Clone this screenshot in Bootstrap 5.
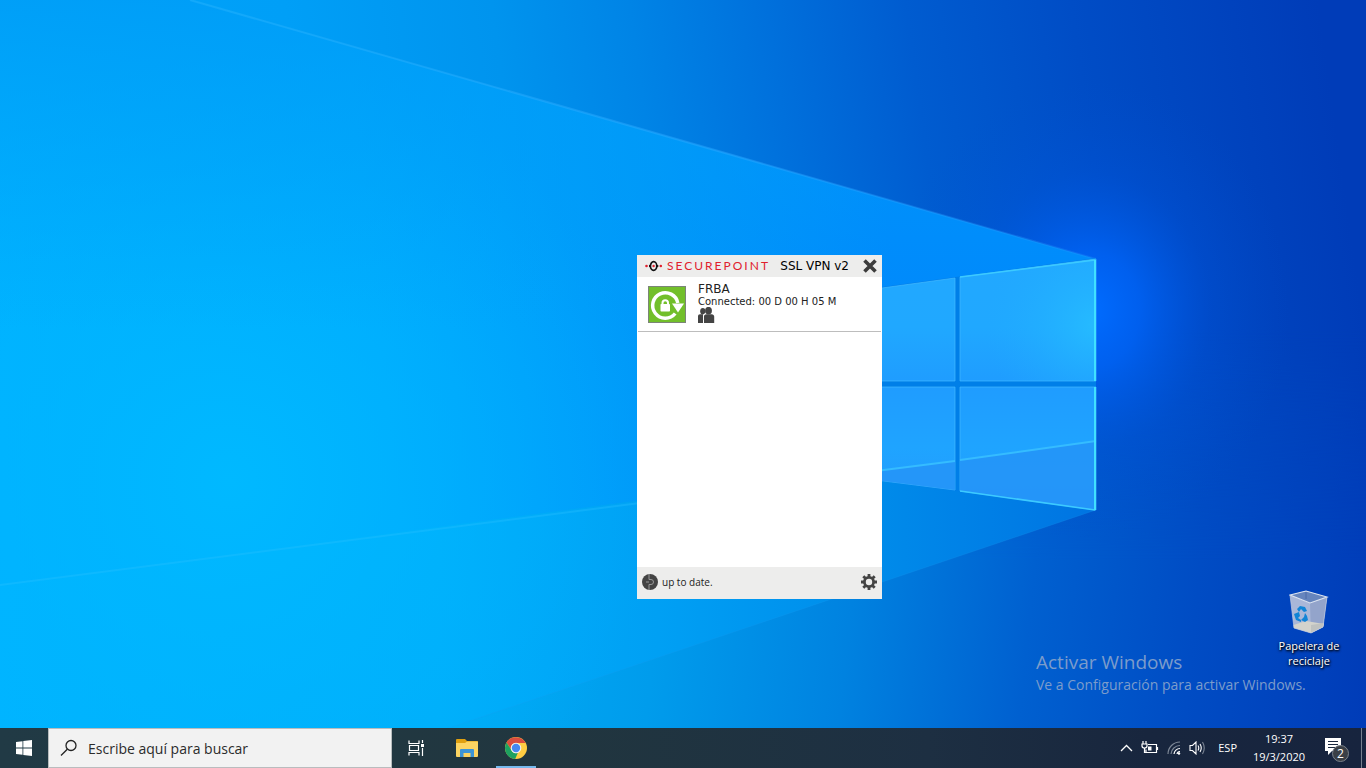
<!DOCTYPE html>
<html lang="es">
<head>
<meta charset="utf-8">
<meta name="viewport" content="width=device-width, initial-scale=1">
<title>Escritorio</title>
<link rel="stylesheet" href="https://cdn.jsdelivr.net/npm/bootstrap@5.3.0/dist/css/bootstrap.min.css">
<style>
  body { font-family: "Open Sans", "Noto Sans", sans-serif; background: #0078d7; }
  svg { display: block; flex: none; }
  button { color: inherit; }
  .wallpaper { width: 100%; height: 100%; z-index: 0; }

  /* VPN client window */
  .vpn { left: 637px; top: 255px; width: 245px; height: 344px; background: #fff; color: #222; font-family: "DejaVu Sans", sans-serif; font-size: 12px; line-height: 14px; }
  .vpn-bar { background: #ededec; }
  .vpn-head { height: 22px; padding: 0 5px 0 8px; }
  .vpn-foot { height: 32px; padding: 0 5px 2px; font-family: "Open Sans", sans-serif; font-size: 10px; }
  .brand-name { font-family: Lato, sans-serif; letter-spacing: 2px; color: #e0202c; }
  .vpn-item { height: 55px; padding: 5px 10px 0; border-bottom: 1px solid #bdbdbd; margin: 0 1px; }
  .conn-time { font-size: 10px; line-height: 11px; }
  .vpn-close { margin-left: 14px; }

  /* Desktop */
  .bin { right: 17px; bottom: 60px; width: 80px; color: #fff; font-size: 11px; line-height: 15px; text-shadow: 1px 1px 2px #000, 0 1px 3px #000; }
  .watermark { right: 54px; bottom: 32px; width: 276px; color: #7c9ccb; font-size: 14px; line-height: 22px; }
  .watermark h1 { font-size: 19px; line-height: 24px; }

  /* Taskbar */
  .taskbar { height: 40px; background: linear-gradient(90deg, #213a45 0%, #21363f 40%, #1d2f42 68%, #18263e 84%, #17243e 100%); color: #fff; font-size: 11px; z-index: 1; }
  .task { width: 48px; height: 40px; }
  .explorer { margin-left: 3px; }
  .task-open { width: 40px; margin: 0 5px; border-bottom: 2px solid #76b9ed !important; }
  .finder { width: 344px; height: 40px; background: #f2f2f2; border: 1px solid #b9bcbe; padding-left: 11px; color: #222; }
  .finder input { font-size: 14px; color: #222; outline: 0; margin-left: 10px; }
  .finder input::placeholder { color: #2b2b2b; opacity: 1; }
  .clock { width: 64px; line-height: 18px; margin: 0 10px; }
  .show-desktop { width: 5px; height: 40px; border-left: 1px solid #76808e !important; }
</style>
</head>
<body class="vh-100 d-flex flex-column overflow-hidden position-relative">

<svg class="wallpaper position-absolute top-0 start-0" viewBox="0 0 1366 768" preserveAspectRatio="none" aria-hidden="true">
  <defs>
    <linearGradient id="base" x1="0" x2="1366" y1="0" y2="0" gradientUnits="userSpaceOnUse" gradientTransform="rotate(-8 683 384)">
      <stop offset="0" stop-color="#00a4fa"/><stop offset=".25" stop-color="#009ff7"/><stop offset=".4" stop-color="#0094ee"/><stop offset=".5" stop-color="#0084e6"/><stop offset=".6" stop-color="#0070dc"/><stop offset=".7" stop-color="#005cd0"/><stop offset=".82" stop-color="#004dc6"/><stop offset="1" stop-color="#003cb8"/>
    </linearGradient>
    <linearGradient id="low" x1="0" x2="1366" y1="560" y2="700" gradientUnits="userSpaceOnUse">
      <stop offset="0" stop-color="#00b6ff"/><stop offset=".3" stop-color="#00b0f8"/><stop offset=".48" stop-color="#009cec"/><stop offset=".62" stop-color="#0082e0"/><stop offset=".75" stop-color="#0060d0"/><stop offset=".87" stop-color="#004cc4"/><stop offset="1" stop-color="#003cb8"/>
    </linearGradient>
    <linearGradient id="beam" x1="0" x2="1096" y1="420" y2="300" gradientUnits="userSpaceOnUse">
      <stop offset="0" stop-color="#00b2ff"/><stop offset=".35" stop-color="#00a8fd"/><stop offset=".6" stop-color="#0098f9"/><stop offset=".82" stop-color="#0088fc"/><stop offset="1" stop-color="#0088fc"/>
    </linearGradient>
    <linearGradient id="dusk" x1="0" x2="0" y1="0" y2="330" gradientUnits="userSpaceOnUse">
      <stop offset="0" stop-color="#009bf6" stop-opacity=".8"/><stop offset="1" stop-color="#00a0f8" stop-opacity="0"/>
    </linearGradient>
    <linearGradient id="under" x1="0" x2="1096" y1="0" y2="0" gradientUnits="userSpaceOnUse">
      <stop offset="0" stop-color="#00b4ff"/><stop offset=".4" stop-color="#00aefa"/><stop offset=".6" stop-color="#00a0f4"/><stop offset=".8" stop-color="#008bea"/><stop offset="1" stop-color="#0074e2"/>
    </linearGradient>
    <radialGradient id="glow">
      <stop offset="0" stop-color="#006cff"/><stop offset=".25" stop-color="#0066fc" stop-opacity=".75"/><stop offset=".6" stop-color="#0058e4" stop-opacity=".25"/><stop offset="1" stop-color="#0050d0" stop-opacity="0"/>
    </radialGradient>
    <radialGradient id="soft" cx="230" cy="480" r="430" gradientUnits="userSpaceOnUse">
      <stop offset="0" stop-color="#00b9ff"/><stop offset="1" stop-color="#00b4ff" stop-opacity="0"/>
    </radialGradient>
    <linearGradient id="ray" x1="190" x2="1096" y1="0" y2="0" gradientUnits="userSpaceOnUse">
      <stop offset="0" stop-color="#3cbcff" stop-opacity=".3"/><stop offset=".6" stop-color="#2ba6ff" stop-opacity=".5"/><stop offset="1" stop-color="#2a9aff" stop-opacity=".25"/>
    </linearGradient>
    <linearGradient id="pane" x1="0" x2="0" y1="260" y2="510" gradientUnits="userSpaceOnUse">
      <stop offset="0" stop-color="#22a8ff"/><stop offset=".27" stop-color="#20a8ff"/><stop offset=".5" stop-color="#1f9cff"/><stop offset=".75" stop-color="#1fa4ff"/><stop offset="1" stop-color="#259afd"/>
    </linearGradient>
    <radialGradient id="shine" cx="1096" cy="325" r="110" gradientUnits="userSpaceOnUse">
      <stop offset="0" stop-color="#27c0ff" stop-opacity=".8"/><stop offset="1" stop-color="#20acff" stop-opacity="0"/>
    </radialGradient>
    <linearGradient id="fade" x1="0" x2="0" y1="330" y2="560" gradientUnits="userSpaceOnUse">
      <stop offset="0" stop-color="#fff" stop-opacity="0"/><stop offset="1" stop-color="#fff"/>
    </linearGradient>
    <mask id="lower"><rect width="1366" height="768" fill="url(#fade)"/></mask>
  </defs>
  <rect width="1366" height="768" fill="url(#base)"/>
  <rect width="1366" height="768" fill="url(#low)" mask="url(#lower)"/>
  <ellipse cx="1090" cy="310" rx="200" ry="230" fill="url(#glow)"/>
  <path d="M0 0H190L1096 259V440L0 585Z" fill="url(#beam)"/>
  <path d="M0 585L1096 440V510L330 768H0Z" fill="url(#under)"/>
  <rect width="700" height="768" fill="url(#soft)"/>
  <path d="M0 0H190L1096 259V330H0Z" fill="url(#dusk)"/>
  <path d="M190 0L1096 259" stroke="url(#ray)" stroke-width="2"/>
  <path d="M0 585L640 503" stroke="#28c0ff" stroke-opacity=".35" stroke-width="2"/>
  <path d="M330 768L1096 510" stroke="#1f9af2" stroke-opacity=".2"/>
  <path d="M860 290L1096 258V510L860 478Z" fill="#007fe8"/>
  <g fill="url(#pane)" stroke="#43b9ff" stroke-opacity=".7">
    <path d="M860 291L955 278V381H860Z"/><path d="M960 277L1096 259V381H960Z"/>
    <path d="M860 387H955V490L860 478Z"/><path d="M960 387H1096V510L960 491Z"/>
  </g>
  <path d="M960 277L1096 259V381H960Z" fill="url(#shine)"/>
  <path d="M860 473L955 461V490L860 478ZM960 460L1096 441V510L960 491Z" fill="#2494f8" opacity=".85"/>
  <path d="M860 473L955 461M960 460L1096 441" stroke="#35bcff" stroke-width="2"/>
  <path d="M960 277L1095 260M1095 510L960 491" fill="none" stroke="#3ccaff" stroke-width="1.500"/>
  <path d="M1095 260V381M1095 387V510" stroke="#40e0ff" stroke-width="2"/>
</svg>

<main class="flex-grow-1 position-relative">
  <section class="vpn position-absolute d-flex flex-column" aria-label="SSL VPN">
    <header class="vpn-bar vpn-head d-flex align-items-center">
      <svg width="18" height="12" viewBox="0 0 18 12"><circle cx="1.500" cy="6" r="1.300" fill="#e0202c"/><circle cx="15.800" cy="6" r="1.300" fill="#e0202c"/><ellipse cx="8.600" cy="6" rx="3.200" ry="4.300" fill="none" stroke="#111" stroke-width="1.700"/><path d="M4 6h1.500M11.800 6h1.500" stroke="#111" stroke-width="1.800"/><circle cx="8.600" cy="6" r="1.200" fill="#e0202c"/></svg>
      <span class="brand-name ps-1">SECUREPOINT</span>
      <span class="ms-auto text-black text-nowrap">SSL VPN v2</span>
      <button class="vpn-close border-0 bg-transparent p-0" aria-label="Cerrar"><svg width="14" height="14" viewBox="0 0 14 14"><path d="M1.500 1.500L12.500 12.500M12.500 1.500L1.500 12.500" stroke="#3c3c3c" stroke-width="3.600"/></svg></button>
    </header>
    <div class="vpn-item d-flex">
      <svg class="mt-1" width="38" height="38" viewBox="0 0 38 38"><rect x=".5" y=".5" width="37" height="36" fill="#72bf2a" stroke="#7b8577"/><path d="M27.200 27.500A12.700 12.700 0 1 1 29.800 17" fill="none" stroke="#fff" stroke-width="3.500"/><path d="M24 17.500H36L30 26.500Z" fill="#fff"/><rect x="12.500" y="18" width="9.500" height="7.500" rx=".8" fill="#fff"/><path d="M14.500 18.500V17a2.750 2.750 0 0 1 5.500 0V18.500" fill="none" stroke="#fff" stroke-width="2"/></svg>
      <div class="ms-2 ps-1">
        <div>FRBA</div>
        <div class="conn-time">Connected: 00 D 00 H 05 M</div>
        <svg width="17" height="17" viewBox="0 0 17 17" fill="#444"><ellipse cx="4.800" cy="4.200" rx="2.600" ry="3.300"/><path d="M0 16V9Q0 7.300 2 7.300H5V16Z"/><ellipse cx="10.500" cy="3.700" rx="3.400" ry="3.800"/><path d="M5.900 16V9.800Q5.900 7.300 8.500 7.300H13.500Q16.200 7.300 16.200 9.800V16Z"/><path d="M5.500 16V8.500Q5.700 7 7.500 6.500" fill="none" stroke="#fff" stroke-width=".8"/></svg>
      </div>
    </div>
    <footer class="vpn-bar vpn-foot d-flex align-items-center mt-auto">
      <svg width="16" height="16" viewBox="0 0 16 16"><circle cx="8" cy="8" r="8" fill="#444"/><path d="M7 0V5.500H9Q11.500 5.500 11.500 8T9 10.500H7V16M7 8H4" fill="none" stroke="#999" stroke-width="1"/></svg>
      <span class="ps-1">up to date.</span>
      <button class="border-0 bg-transparent p-0 ms-auto" aria-label="Configuración"><svg width="16" height="16" viewBox="0 0 16 16"><circle cx="8" cy="8" r="4.600" fill="none" stroke="#444" stroke-width="2.800"/><path d="M8 0V3.500M8 12.500V16M0 8H3.500M12.500 8H16M2.300 2.300L4.800 4.800M11.200 11.200L13.700 13.700M13.700 2.300L11.200 4.800M4.800 11.200L2.300 13.700" stroke="#444" stroke-width="2.800"/></svg></button>
    </footer>
  </section>

  <div class="watermark position-absolute">
    <h1 class="m-0 fw-normal">Activar Windows</h1>
    <div class="text-nowrap">Ve a Configuración para activar Windows.</div>
  </div>

  <a href="#" class="bin position-absolute d-flex flex-column align-items-center text-center text-decoration-none">
    <svg class="mb-1" width="40" height="44" viewBox="0 0 40 44"><path d="M1 5L21 13L38 7L34 37L22 43L5 38Z" fill="#a9b7d8"/><path d="M21 13L38 7L34 37L22 43Z" fill="#93a4cb"/><path d="M1 5L17 1L38 7L21 13Z" fill="#6685bd"/><path d="M17 1V9" stroke="#4d6aa8"/><path d="M4.500 35L17 31L35 34L34 37L22 43L5 38Z" fill="#d3d3cc"/><path d="M22 35L35 33L34 37L22 43Z" fill="#bfc2c0"/><path d="M1 5L17 1L38 7L21 13Z" fill="none" stroke="#dfe6f1" stroke-width="1.100"/><path d="M1 5L5 38L22 43L34 37L38 7" fill="none" stroke="#c3cce0" stroke-width=".7"/><g fill="#1184d6"><path d="M8 19L11 16L16 17L18 21L15 22L12 19L10 22Z"/><path d="M5 24L10 22L11 26L9 28L12 30V32L7 30Z"/><path d="M16 23L18 26L19 30L16 32L12 30L15 27Z"/></g></svg>
    <span>Papelera de reciclaje</span>
  </a>
</main>

<nav class="taskbar d-flex align-items-center" aria-label="Barra de tareas">
  <button class="task border-0 bg-transparent p-0 d-flex align-items-center justify-content-center" aria-label="Inicio"><svg width="16" height="16" viewBox="0 0 16 16" fill="#fff"><path d="M0 2L6.500 1.200V7.500H0ZM7.300 1L16 0V7.500H7.300ZM0 8.400H6.500V14.800L0 14ZM7.300 8.400H16V16L7.300 15Z"/></svg></button>
  <label class="finder d-flex align-items-center">
    <svg width="18" height="18" viewBox="0 0 18 18" fill="none" stroke="#222" stroke-width="1.300"><circle cx="11" cy="6.500" r="5"/><path d="M7.300 10.200L1 16.500"/></svg>
    <input class="flex-grow-1 border-0 bg-transparent p-0" type="text" placeholder="Escribe aquí para buscar" aria-label="Buscar">
  </label>
  <button class="task border-0 bg-transparent p-0 d-flex align-items-center justify-content-center" aria-label="Vista de tareas"><svg width="17" height="16" viewBox="0 0 17 16" fill="none" stroke="#fff" stroke-width="1.200"><path d="M1 .5V3.500H11V.5M1 15.500V12.500H11V15.500M1.500 5.500H10.500V10.500H1.500ZM14.500 0V3M14.500 8V16"/><path d="M13 4H16V7H13Z" fill="#fff" stroke="none"/></svg></button>
  <button class="task explorer border-0 bg-transparent p-0 d-flex align-items-center justify-content-center" aria-label="Explorador de archivos"><svg width="22" height="19" viewBox="0 0 22 19"><path d="M0 1Q0 0 1 0H9L11 2H21Q22 2 22 3V17H0Z" fill="#e0a010"/><path d="M0 4H9L11 2.500H22V17Q22 18 21 18H1Q0 18 0 17Z" fill="#fcd462"/><path d="M4 18V11Q4 10 5 10H17Q18 10 18 11V18H14.500V14H7.500V18Z" fill="#3c94d6"/></svg></button>
  <button class="task task-open border-0 bg-transparent p-0 d-flex align-items-center justify-content-center" aria-label="Google Chrome"><svg width="22" height="24" viewBox="0 -2 22 24"><circle cx="11" cy="11" r="11" fill="#ffcd42"/><path d="M1.500 5.500A11 11 0 0 1 20.600 6H11A5 5 0 0 0 6.500 13.300Z" fill="#da4d3f"/><path d="M1.500 5.500L6.700 13.500A5 5 0 0 0 13 15.600L10.200 22A11 11 0 0 1 1.500 5.500Z" fill="#1da160"/><circle cx="11" cy="11" r="5.300" fill="#f1f1f1"/><circle cx="11" cy="11" r="4.200" fill="#4688f1"/></svg></button>

  <div class="d-flex align-items-center ms-auto">
    <button class="border-0 bg-transparent p-0" aria-label="Iconos ocultos"><svg width="13" height="8" viewBox="0 0 13 8" fill="none" stroke="#fff" stroke-width="1.300"><path d="M1 7L6.500 1.500L12 7"/></svg></button>
    <svg class="ms-2" width="18" height="14" viewBox="0 0 18 14" fill="none" stroke="#fff" stroke-width="1.200"><path d="M7 3.500H15.500V11.500H5V8.500M16.500 6V9M2 0V3M5 0V3M1 3H6V5Q6 7 3.500 7T1 5ZM3.500 7V11.500H5"/><path d="M7 5.500H10.500V9.500H7Z" fill="#fff" stroke="none"/></svg>
    <svg class="ms-2" width="14" height="14" viewBox="0 0 14 14" fill="none" stroke-width="1.200"><g stroke="#7d8796"><path d="M1 13A12 12 0 0 1 13 1M4 13A9 9 0 0 1 13 4.500"/></g><path d="M7 13A6 6 0 0 1 13 7.500M10 13A3 3 0 0 1 13 10.500" stroke="#fff"/><circle cx="12" cy="12.500" r="1.200" fill="#fff"/></svg>
    <svg class="ms-2" width="17" height="14" viewBox="0 0 17 14" fill="none" stroke="#fff" stroke-width="1.100"><path d="M1 4.500H3.500L7 1V13L3.500 9.500H1ZM9 4.500Q10.500 7 9 9.500M11 3Q13.500 7 11 11"/><path d="M13.500 1Q17 7 13.500 13" stroke="#7d8796"/></svg>
    <button class="border-0 bg-transparent p-0 ms-2 ps-1">ESP</button>
    <div class="clock text-center"><div>19:37</div><div>19/3/2020</div></div>
    <button class="border-0 bg-transparent p-0 ms-1 me-2" aria-label="2 notificaciones"><svg width="28" height="28" viewBox="0 -4 28 28"><path d="M0 0H16V13H7L3 17V13H0Z" fill="#fff"/><path d="M3 3.500H13M3 6.500H13M3 9.500H10" stroke="#1a2940" stroke-width="1"/><circle cx="15.500" cy="15.500" r="8" fill="#3a3f46" stroke="#7b828b"/><text x="15.500" y="20" text-anchor="middle" font-size="12" fill="#fff">2</text></svg></button>
    <button class="show-desktop border-0 bg-transparent p-0" aria-label="Mostrar escritorio"></button>
  </div>
</nav>
<script src="https://cdn.jsdelivr.net/npm/bootstrap@5.3.0/dist/js/bootstrap.bundle.min.js"></script>
</body>
</html>
